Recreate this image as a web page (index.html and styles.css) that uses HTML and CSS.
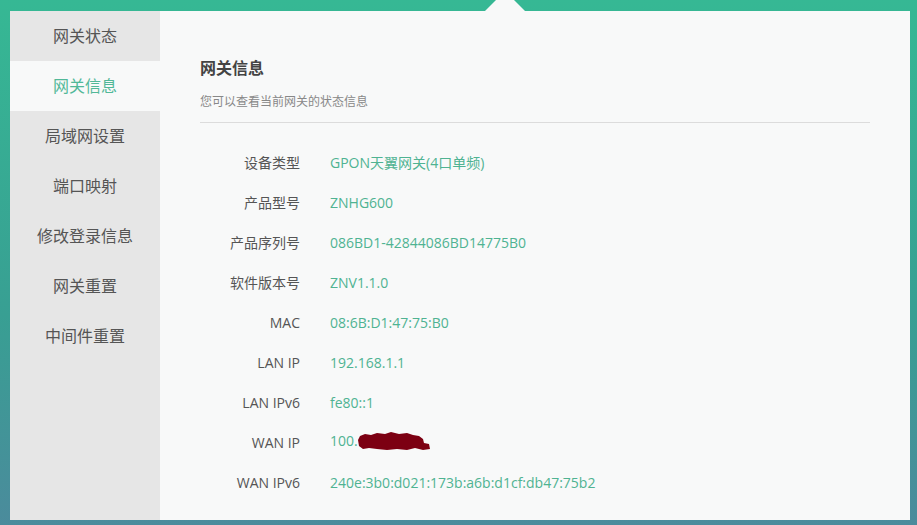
FILE: index.html
```
<!DOCTYPE html>
<html lang="zh-CN">

<head>
    <meta charset="UTF-8">
    <title>网关信息</title>
    <link rel="stylesheet" href="styles.css">
</head>

<body>
    <div class="page">
        <div class="panel">
            <span class="notch"></span>

            <ul class="side-menu">
                <li>网关状态</li>
                <li class="active">网关信息</li>
                <li>局域网设置</li>
                <li>端口映射</li>
                <li>修改登录信息</li>
                <li>网关重置</li>
                <li>中间件重置</li>
            </ul>

            <div class="content">
                <div class="content-head">
                    <h3>网关信息</h3>
                    <p>您可以查看当前网关的状态信息</p>
                </div>

                <div class="info-list">
                    <div class="info-row"><span class="label">设备类型</span><span class="value">GPON天翼网关(4口单频)</span></div>
                    <div class="info-row"><span class="label">产品型号</span><span class="value">ZNHG600</span></div>
                    <div class="info-row"><span class="label">产品序列号</span><span class="value">086BD1-42844086BD14775B0</span></div>
                    <div class="info-row"><span class="label">软件版本号</span><span class="value">ZNV1.1.0</span></div>
                    <div class="info-row"><span class="label">MAC</span><span class="value">08:6B:D1:47:75:B0</span></div>
                    <div class="info-row"><span class="label">LAN IP</span><span class="value">192.168.1.1</span></div>
                    <div class="info-row"><span class="label">LAN IPv6</span><span class="value">fe80::1</span></div>
                    <div class="info-row">
                        <span class="label">WAN IP</span>
                        <span class="value">100.<svg class="redact" width="74" height="22" viewBox="0 0 74 22"><path d="M1 9 L3 5 L8 3 L14 4 L20 2 L28 3 L34 1 L42 3 L50 2 L56 4 L62 5 L66 8 L67 12 L72 13 L73 18 L66 19 L58 17 L50 19 L40 18 L30 19 L20 18 L12 17 L6 18 L2 15 Z" fill="#7c0012"/></svg></span>
                    </div>
                    <div class="info-row"><span class="label">WAN IPv6</span><span class="value">240e:3b0:d021:173b:a6b:d1cf:db47:75b2</span></div>
                </div>
            </div>
        </div>
    </div>
</body>

</html>
```

FILE: styles.css
```
html,
body {
    margin: 0;
    height: 100%;
}

body {
    font-family: "Open Sans", "Noto Sans CJK SC", sans-serif;
    background: linear-gradient(to bottom, #36b894 0%, #389f93 60%, #4b8b9c 100%);
    overflow: hidden;
}

.page {
    padding: 11px 7px 5px 10px;
}

.panel {
    position: relative;
    display: flex;
    height: 509px;
    background: #f8f9f9;
}

.notch {
    position: absolute;
    top: -20px;
    left: 475px;
    width: 0;
    height: 0;
    border-left: 20px solid transparent;
    border-right: 20px solid transparent;
    border-bottom: 20px solid #f8f9f9;
}

.side-menu {
    list-style: none;
    margin: 0;
    padding: 0;
    width: 150px;
    flex-shrink: 0;
    background: #e6e6e6;
}

.side-menu li {
    height: 50px;
    line-height: 50px;
    text-align: center;
    font-size: 16px;
    color: #555;
    cursor: pointer;
}

.side-menu li.active {
    background: #f8f9f9;
    color: #52b898;
}

.content {
    flex: 1;
    padding: 45px 40px 0 40px;
}

.content-head {
    border-bottom: 1px solid #dcdcdc;
    padding-bottom: 11px;
}

.content-head h3 {
    margin: 0;
    font-size: 16px;
    line-height: 24px;
    font-weight: bold;
    color: #444;
}

.content-head p {
    margin: 13px 0 0 0;
    font-size: 12px;
    line-height: 18px;
    color: #888;
}

.info-list {
    margin-top: 19px;
}

.info-row {
    display: flex;
    align-items: center;
    height: 40px;
    font-size: 14px;
}

.info-row .label {
    width: 100px;
    text-align: right;
    color: #555;
}

.info-row .value {
    margin-left: 30px;
    color: #4fb392;
    white-space: nowrap;
}

.redact {
    vertical-align: middle;
    margin-left: -1px;
}
```
